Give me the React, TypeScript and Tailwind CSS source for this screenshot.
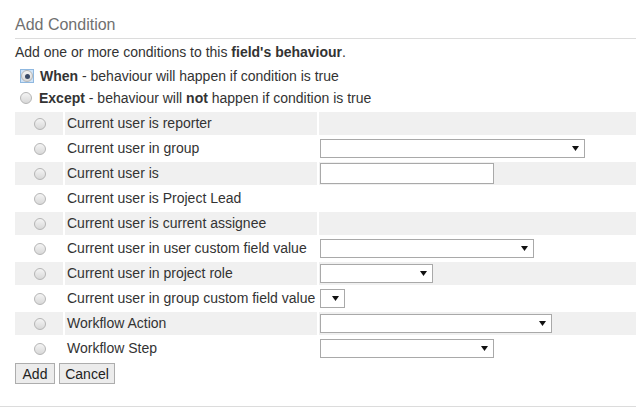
import React from "react";

type Row = {
  label: string;
  field?: { kind: "select" | "text"; width: number };
};

const rows: Row[] = [
  { label: "Current user is reporter" },
  { label: "Current user in group", field: { kind: "select", width: 265 } },
  { label: "Current user is", field: { kind: "text", width: 174 } },
  { label: "Current user is Project Lead" },
  { label: "Current user is current assignee" },
  { label: "Current user in user custom field value", field: { kind: "select", width: 214 } },
  { label: "Current user in project role", field: { kind: "select", width: 113 } },
  { label: "Current user in group custom field value", field: { kind: "select", width: 25 } },
  { label: "Workflow Action", field: { kind: "select", width: 232 } },
  { label: "Workflow Step", field: { kind: "select", width: 174 } },
];

const Radio: React.FC<{ checked?: boolean }> = ({ checked }) => (
  <span
    className={
      checked
        ? "flex h-[14px] w-[14px] items-center justify-center bg-[#cfe3f7] border border-[#8fb8e0]"
        : "flex h-[14px] w-[14px] items-center justify-center"
    }
  >
    <span className="flex h-[12px] w-[12px] items-center justify-center rounded-full border border-[#b5b5b5] bg-gradient-to-b from-[#f4f4f4] to-[#d8d8d8]">
      {checked && <span className="h-[5px] w-[5px] rounded-full bg-[#3a4a66]" />}
    </span>
  </span>
);

const Arrow: React.FC = () => (
  <svg width="7" height="5" viewBox="0 0 7 5" className="shrink-0">
    <path d="M0 0 H7 L3.5 5 Z" fill="#111" />
  </svg>
);

const Field: React.FC<{ kind: "select" | "text"; width: number }> = ({ kind, width }) =>
  kind === "select" ? (
    <div
      className="flex h-[19px] items-center justify-end border border-[#a9a9a9] bg-white pr-[5px]"
      style={{ width }}
    >
      <Arrow />
    </div>
  ) : (
    <div className="h-[21px] border border-[#a9a9a9] bg-white" style={{ width }} />
  );

const App: React.FC = () => {
  return (
    <div className="relative h-[410px] w-[636px] overflow-hidden bg-white font-['Liberation_Sans',Arial,sans-serif] text-[14px] text-[#333]">
      {/* Heading */}
      <div className="ml-[15px] border-b border-[#dcdcdc] pb-[3px] pt-[15px]">
        <h2 className="text-[16px] leading-[20px] text-[#707070]">Add Condition</h2>
      </div>

      <p className="ml-[15px] mt-[4px] leading-[18px]">
        Add one or more conditions to this <b>field's behaviour</b>.
      </p>

      {/* When / Except */}
      <div className="mt-[4px] flex h-[22px] items-center pl-[20px]">
        <Radio checked />
        <span className="ml-[6px]">
          <b>When</b> - behaviour will happen if condition is true
        </span>
      </div>
      <div className="flex h-[22px] items-center pl-[19px]">
        <Radio />
        <span className="ml-[6px]">
          <b>Except</b> - behaviour will <b>not</b> happen if condition is true
        </span>
      </div>

      {/* Conditions */}
      <div className="ml-[15px] mt-[3px] flex flex-col gap-[2px]">
        {rows.map((r, i) => {
          const bg = i % 2 === 0 ? "bg-[#f0f0f0]" : "bg-white";
          return (
            <div key={r.label} className="grid h-[23px] grid-cols-[48px_252px_1fr] gap-x-[2px]">
              <div className={`${bg} flex items-center justify-center pl-[2px]`}>
                <Radio />
              </div>
              <div className={`${bg} flex items-center whitespace-nowrap pl-[2px]`}>{r.label}</div>
              <div className={`${bg} flex items-center pl-[1px]`}>
                {r.field && <Field kind={r.field.kind} width={r.field.width} />}
              </div>
            </div>
          );
        })}
      </div>

      {/* Buttons */}
      <div className="ml-[15px] mt-[3px] flex gap-[4px]">
        <button className="h-[21px] w-[40px] border border-[#adadad] bg-[#ececec] text-[14px] text-[#222]">
          Add
        </button>
        <button className="h-[21px] w-[56px] border border-[#adadad] bg-[#ececec] text-[14px] text-[#222]">
          Cancel
        </button>
      </div>

      <div className="mt-[22px] border-t border-[#dcdcdc]" />
    </div>
  );
};

export default App;
